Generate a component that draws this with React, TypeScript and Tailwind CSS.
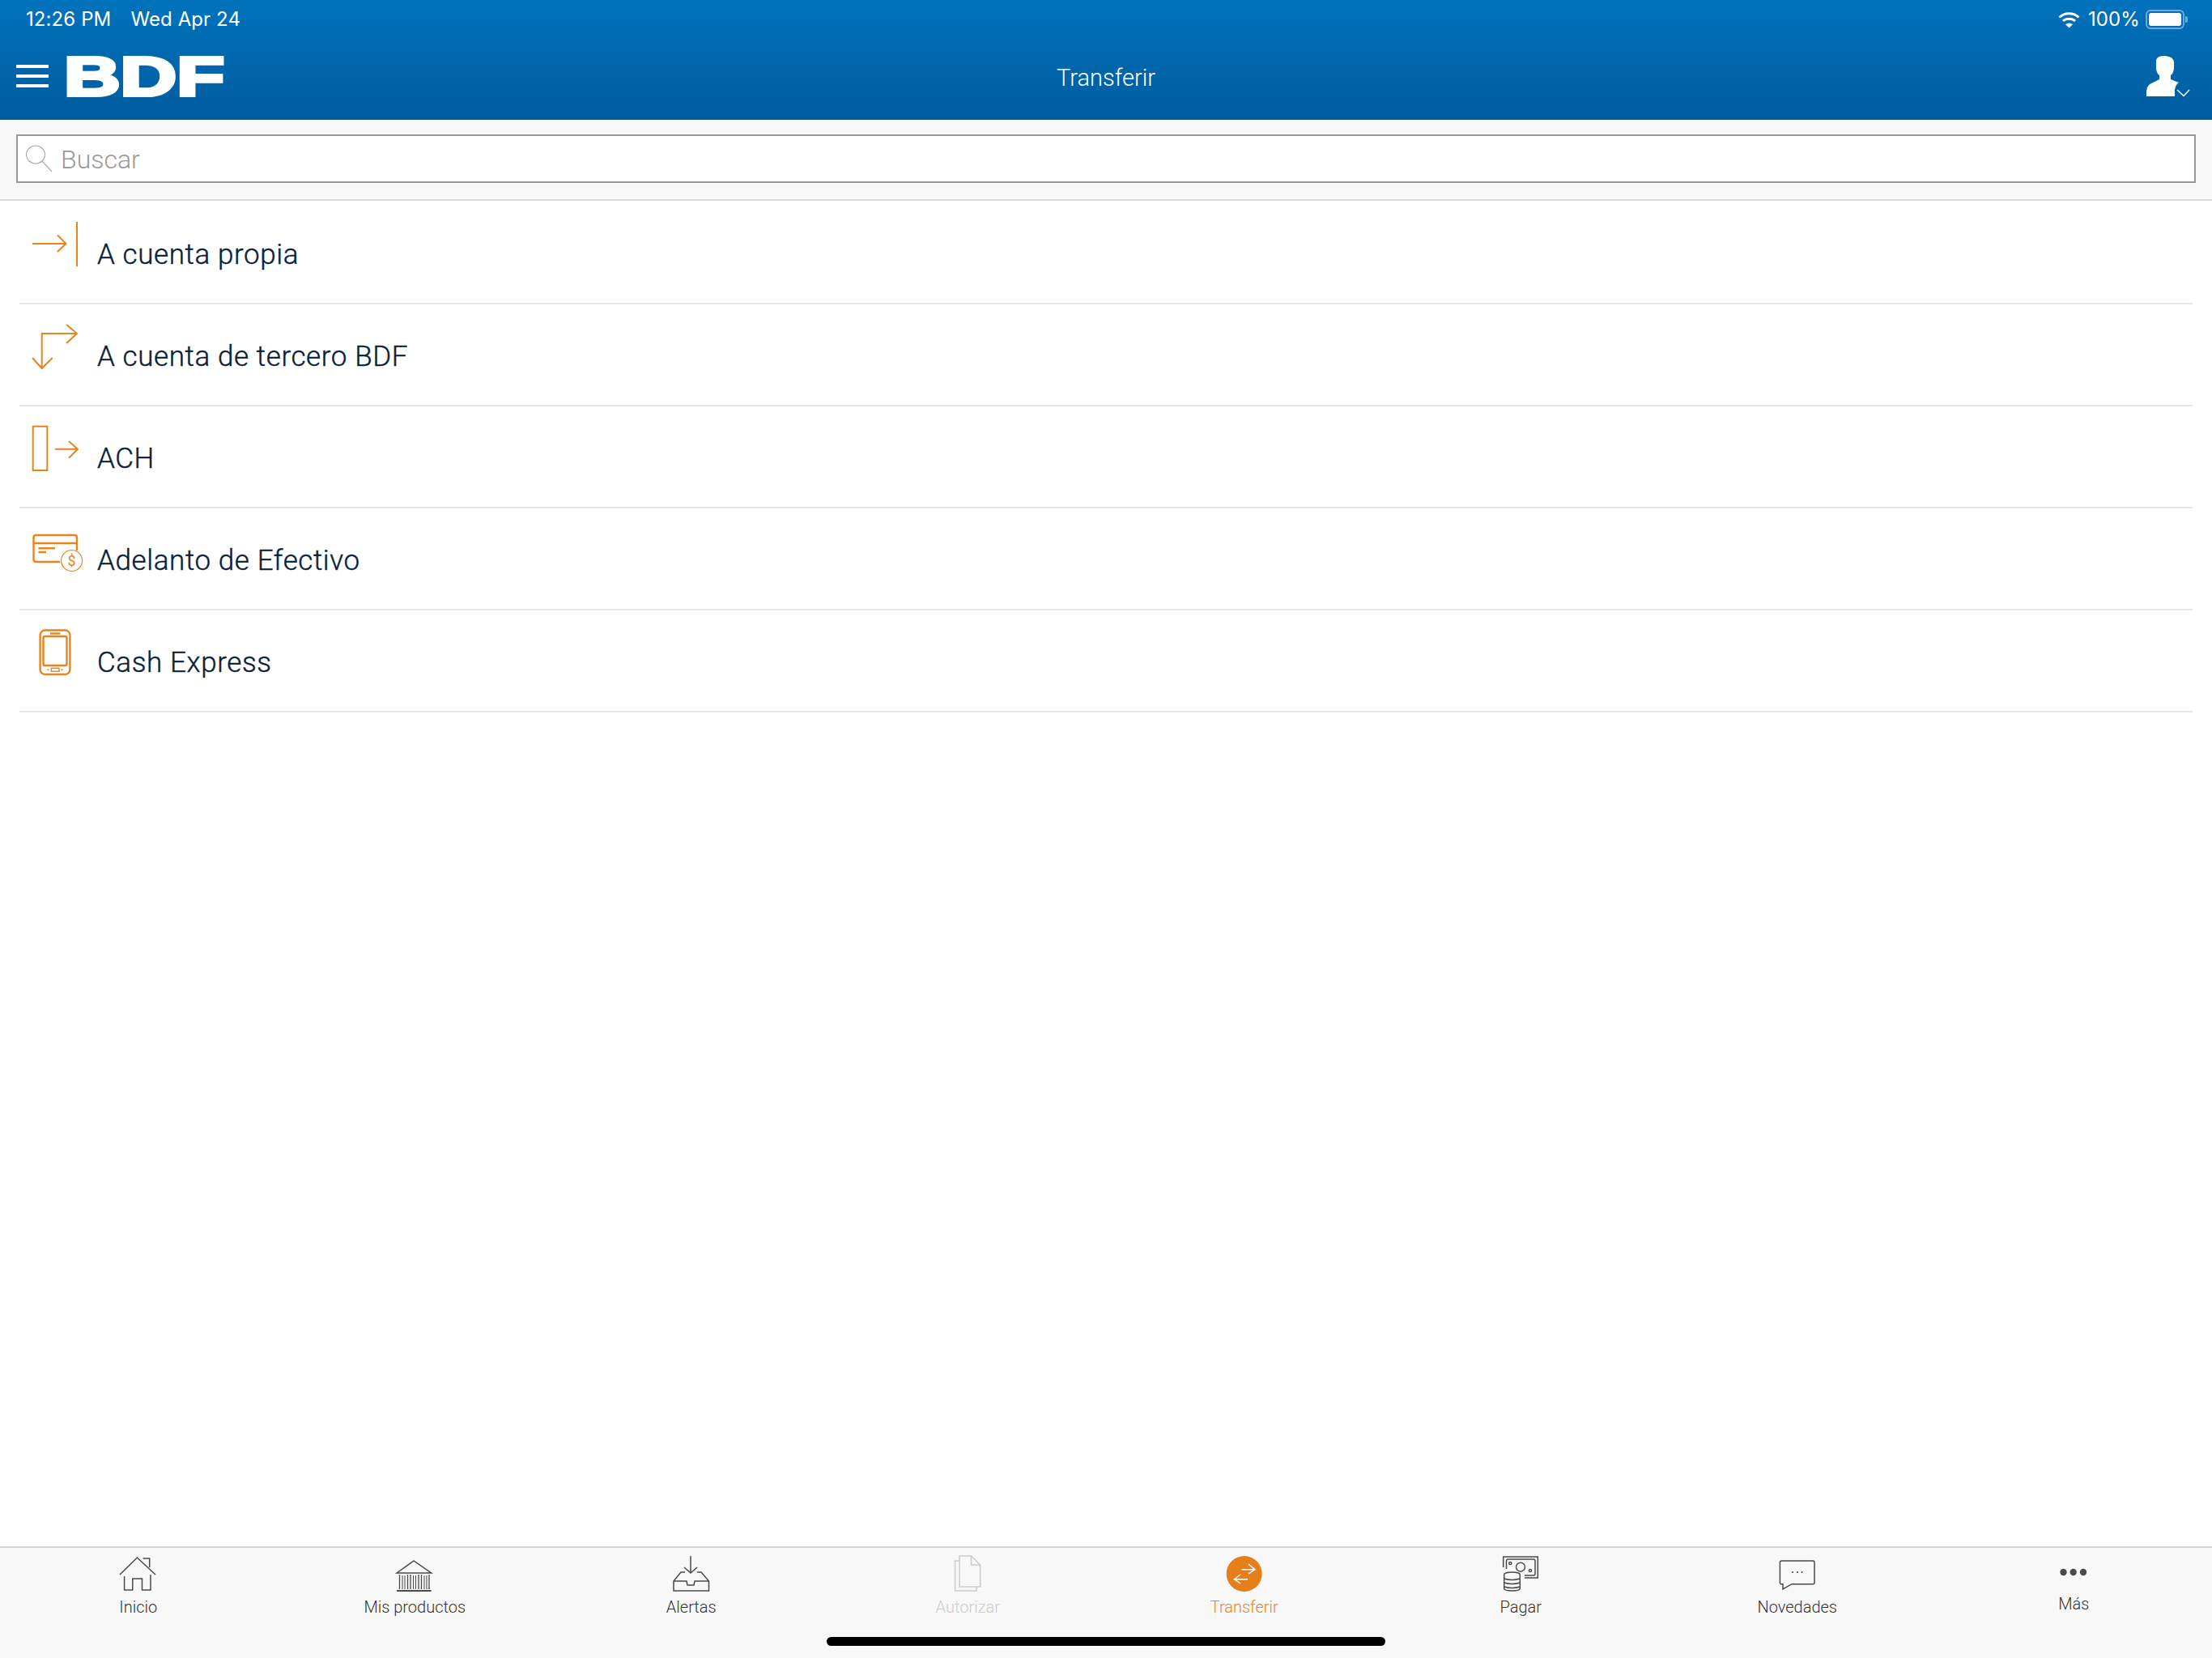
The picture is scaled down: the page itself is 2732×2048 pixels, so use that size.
const orange = '#e6851e'
const grey = '#4a4a4a'

const rows = [
  {
    label: 'A cuenta propia',
    box: '24 250 96 126',
    icon: (
      <>
        <path d="M40 301H81.5M71 290.5 81.5 301 71 311" />
        <path d="M95 274V329" />
      </>
    ),
  },
  {
    label: 'A cuenta de tercero BDF',
    box: '24 376 96 126',
    icon: (
      <>
        <path d="M51.7 454V412H95M82 401 95 412 82 424" />
        <path d="M40 442 51.7 455 64.8 442" />
      </>
    ),
  },
  {
    label: 'ACH',
    box: '24 502 96 126',
    icon: (
      <>
        <rect x="40.7" y="526.7" width="17.6" height="54.3" />
        <path d="M68 554.7H96M85 545 96 554.7 85 565.7" />
      </>
    ),
  },
  {
    label: 'Adelanto de Efectivo',
    box: '24 628 96 126',
    icon: (
      <>
        <g strokeWidth="2.4">
          <path d="M95 680V664Q95 661 92 661H44.5Q41.5 661 41.5 664V691Q41.5 694 44.5 694H74" />
          <path d="M41.5 671H95M47.5 677.3H68M47.5 682H57" />
        </g>
        <circle cx="88.6" cy="692.5" r="13" strokeWidth="1.2" />
        <text x="88.6" y="699" fontSize="18" textAnchor="middle" fill={orange} stroke="none" fontFamily="Roboto, sans-serif">$</text>
      </>
    ),
  },
  {
    label: 'Cash Express',
    box: '24 754 96 126',
    icon: (
      <>
        <g strokeWidth="2.4">
          <rect x="49.6" y="778.5" width="36.8" height="54.5" rx="6" />
          <rect x="53.5" y="786" width="29" height="36" rx="2" />
          <path d="M62 782.5H74.5" />
        </g>
        <rect x="63.4" y="825.3" width="9.6" height="4" strokeWidth="1.4" />
        <circle cx="59.3" cy="827.3" r="0.8" fill={orange} strokeWidth="0.6" />
        <circle cx="76.5" cy="827.3" r="0.8" fill={orange} strokeWidth="0.6" />
      </>
    ),
  },
]

const tabs = [
  {
    label: 'Inicio',
    box: '146 1920 50 48',
    icon: (
      <>
        <path d="M148 1945 169.4 1924 192 1945" />
        <path d="M176.5 1925H184.7V1936" />
        <path d="M153.6 1947V1964H163.8V1950H175.5V1964H186V1945" />
      </>
    ),
  },
  {
    label: 'Mis productos',
    box: '487 1920 50 48',
    icon: (
      <>
        <path d="M490 1943 511 1928 532.6 1943Z" />
        <path d="M490 1965H532.6" strokeWidth="2" />
        <path d="M493.500 1945V1963M503.500 1945V1963M507 1945V1963M517 1945V1963M520.500 1945V1963M530 1945V1963" strokeWidth="1.300" />
        <path d="M497 1946V1963M500 1946V1963M510.500 1946V1963M513.500 1946V1963M524 1946V1963M527 1946V1963" strokeWidth="1" />
      </>
    ),
  },
  {
    label: 'Alertas',
    box: '828 1920 50 48',
    icon: (
      <>
        <path d="M852 1922V1943M844 1936 852 1943 860 1936" />
        <path d="M845 1942H840L831 1953V1965H874.5V1953L865 1942H860" />
        <path d="M831 1953H847L848 1958H856L857 1953H874.5" />
      </>
    ),
  },
  {
    label: 'Autorizar',
    disabled: true,
    box: '1170 1920 50 48',
    icon: (
      <>
        <path d="M1185 1928H1179.6V1965H1206V1960" />
        <path d="M1185 1922H1199.5L1210.7 1933V1960H1185Z" />
        <path d="M1199.5 1922V1933H1210.7" />
      </>
    ),
  },
  {
    label: 'Transferir',
    active: true,
    box: '1511 1920 50 48',
    icon: (
      <>
        <circle cx="1535.7" cy="1944" r="22" fill="#e47f1a" stroke="none" />
        <g stroke="#ffffff">
          <path d="M1532.6 1938.7H1549M1541 1932 1549 1938.7 1541 1944" />
          <path d="M1523.5 1950.7H1540M1531 1945 1523.5 1950.7 1531 1956" />
        </g>
      </>
    ),
  },
  {
    label: 'Pagar',
    box: '1853 1920 50 48',
    icon: (
      <>
        <path d="M1856.7 1936V1923H1899.3V1949H1883" />
        <path d="M1860.5 1938V1928Q1860.5 1926 1862.5 1926H1894Q1896 1926 1896 1928V1944Q1896 1946 1894 1946H1883" />
        <circle cx="1878" cy="1935.7" r="5.5" />
        <circle cx="1865.3" cy="1931" r="1.6" />
        <circle cx="1890" cy="1940" r="1.6" />
        <ellipse cx="1867.5" cy="1945" rx="9.8" ry="3" fill="#f8f8f8" />
        <path d="M1857.7 1945V1962Q1857.7 1965 1867.5 1965Q1877.3 1965 1877.3 1962V1945" fill="#f8f8f8" />
        <path d="M1857.7 1950Q1867.5 1953 1877.3 1950M1857.7 1955Q1867.5 1958 1877.3 1955M1857.7 1960Q1867.5 1963 1877.3 1960" />
      </>
    ),
  },
  {
    label: 'Novedades',
    box: '2194 1920 50 48',
    icon: (
      <>
        <path d="M2199.5 1928H2238Q2240 1928 2240 1930V1954.7Q2240 1956.7 2238 1956.7H2212L2201 1963V1956.7H2199.5Q2197.4 1956.7 2197.4 1954.7V1930Q2197.4 1928 2199.5 1928Z" />
        <circle cx="2213" cy="1942" r="1.1" fill={grey} stroke="none" />
        <circle cx="2219" cy="1942" r="1.1" fill={grey} stroke="none" />
        <circle cx="2224.5" cy="1942" r="1.1" fill={grey} stroke="none" />
      </>
    ),
  },
  {
    label: 'Más',
    more: true,
    box: '2536 1920 50 48',
    icon: (
      <>
        <circle cx="2548.5" cy="1942" r="4.2" fill={grey} stroke="none" />
        <circle cx="2560.7" cy="1942" r="4.2" fill={grey} stroke="none" />
        <circle cx="2573" cy="1942" r="4.2" fill={grey} stroke="none" />
      </>
    ),
  },
]

function StatusBar() {
  return (
    <div className="flex h-[48px] items-center justify-between pl-[32px] pr-[30px] text-[24px] tracking-[0.1px] text-white font-['Inter',sans-serif]">
      <div className="flex gap-[24px]">
        <span>12:26 PM</span>
        <span>Wed Apr 24</span>
      </div>
      <div className="flex items-center">
        <svg width="27" height="21" viewBox="0 0 27 21" fill="none" stroke="#ffffff" strokeWidth="3">
          <path d="M1.5 7.5C8 1 19 1 25.500 7.500M6 12C10 8.300 17 8.300 21 12" />
          <path d="M13.500 20.500 9 16Q13.500 13 18 16Z" fill="#ffffff" stroke="none" />
        </svg>
        <span className="ml-[10px]">100%</span>
        <div className="ml-[7px] flex h-[24px] w-[48px] rounded-[6px] border-2 border-[#6fa8d6] p-[2px]">
          <div className="flex-1 rounded-[3px] bg-white" />
        </div>
        <div className="ml-[1px] h-[8px] w-[3px] rounded-r-[2px] bg-[#6fa8d6]" />
      </div>
    </div>
  )
}

function NavBar() {
  return (
    <div className="grid h-[100px] grid-cols-3 items-center pb-[4px]">
      <div className="flex items-center">
        <div className="mb-[4px] ml-[20px] flex w-[40px] flex-col gap-[8px]">
          <div className="h-[4px] bg-white" />
          <div className="h-[4px] bg-white" />
          <div className="h-[4px] bg-white" />
        </div>
        <svg className="ml-[23px] overflow-visible" width="195" height="54" viewBox="0 0 195 54">
          <text
            x="-4"
            y="49"
            textLength="198"
            lengthAdjust="spacingAndGlyphs"
            fontSize="68"
            fontWeight="700"
            fontFamily="'Liberation Sans', sans-serif"
            fill="#ffffff"
            stroke="#ffffff"
            strokeWidth="4"
          >
            BDF
          </text>
        </svg>
      </div>
      <div className="pt-[2px] text-center text-[29px] font-light text-white font-['Roboto',sans-serif]">Transferir</div>
      <div className="flex justify-end">
        <svg className="-mt-[4px] mr-[26px]" width="56" height="52" viewBox="0 0 56 52" fill="#ffffff">
          <path d="M13 8C13 3 17 1 22 1C28 1 35 3 35 9V15C35 19 34 23 31 25V30L41 34C38 36 36 40 36 45V51H1V46C1 41 3 37 7 35L17 30V25C14 23 13 19 13 15Z" />
          <path d="M39 43 47 50.500 54 43" fill="none" stroke="#ffffff" strokeWidth="1.500" />
        </svg>
      </div>
    </div>
  )
}

function SearchBar() {
  return (
    <div className="border-b-2 border-[#d9d9d9] bg-[#f8f8f8] px-[20px] pb-[20px] pt-[18px]">
      <div className="flex h-[60px] items-center border-2 border-[#999999] bg-white pl-[10px]">
        <svg width="34" height="36" viewBox="0 0 34 36" fill="none" stroke="#aaaaaa" strokeWidth="1.2">
          <ellipse cx="12" cy="13" rx="11.500" ry="11" />
          <path d="M20 21 32 34" />
        </svg>
        <span className="ml-[9px] pt-[2px] text-[32px] font-light text-[#999999] font-['Roboto',sans-serif]">Buscar</span>
      </div>
    </div>
  )
}

export default function App() {
  return (
    <div className="relative flex h-[2048px] w-[2732px] flex-col overflow-hidden bg-white">
      <div className="bg-gradient-to-b from-[#0073bd] to-[#005c9e]">
        <StatusBar />
        <NavBar />
      </div>
      <SearchBar />

      <div className="flex-1 px-[24px] pt-[2px]">
        {rows.map((r) => (
          <div key={r.label} className="flex h-[126px] border-b-2 border-[#e5e5e5]">
            <svg width="96" height="126" viewBox={r.box} fill="none" stroke={orange} strokeWidth="2" className="shrink-0">
              {r.icon}
            </svg>
            <span className="mt-[40px] text-[35px] font-light leading-[50px] tracking-[0.6px] text-[#0a2238] [-webkit-text-stroke:0.4px_#0a2238] font-['Roboto',sans-serif]">
              {r.label}
            </span>
          </div>
        ))}
      </div>

      <div className="grid h-[138px] grid-cols-8 border-t-2 border-[#d4d4d4] bg-[#f8f8f8]">
        {tabs.map((t) => (
          <div key={t.label} className="flex flex-col items-center pt-[8px]">
            <svg
              width="50"
              height="48"
              viewBox={t.box}
              fill="none"
              stroke={t.disabled ? '#cccccc' : grey}
              strokeWidth="1.500"
            >
              {t.icon}
            </svg>
            <span
              className={
                "text-[20px] font-light leading-[28px] font-['Roboto',sans-serif] " +
                (t.more ? '-mt-[1px] ' : 'mt-[3px] ') +
                (t.active ? 'text-[#e6851e]' : t.disabled ? 'text-[#cccccc]' : 'text-[#333333]')
              }
            >
              {t.label}
            </span>
          </div>
        ))}
      </div>

      <div className="absolute bottom-[15px] left-[1021px] h-[11px] w-[690px] rounded-full bg-black" />
    </div>
  )
}
